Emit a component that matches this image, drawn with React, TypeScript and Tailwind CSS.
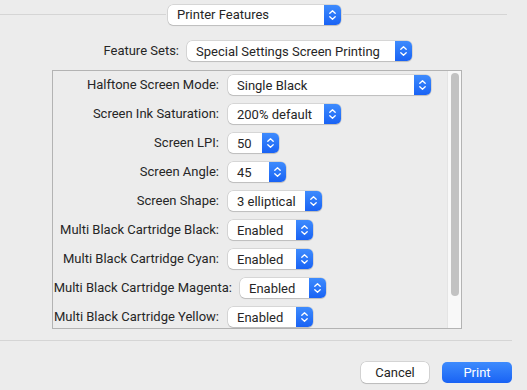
import React from "react";

const Chevrons = () => (
  <svg width="9" height="12" viewBox="0 0 9 12" fill="none" stroke="white" strokeWidth="1.3" strokeLinecap="round" strokeLinejoin="round">
    <path d="M1.8 4.3 L4.5 1.8 L7.2 4.3" />
    <path d="M1.8 7.7 L4.5 10.2 L7.2 7.7" />
  </svg>
);

const Popup = ({ text, width }: { text: string; width: number }) => (
  <div
    className="flex h-[20px] shrink-0 items-stretch rounded-[5px] bg-white shadow-[0_0_0_0.5px_rgba(0,0,0,0.18),0_1px_1px_rgba(0,0,0,0.12)]"
    style={{ width }}
  >
    <div className="flex flex-1 items-center overflow-hidden whitespace-nowrap pl-[9px] text-[13px] leading-none text-[#262626]">{text}</div>
    <div className="flex w-[17px] shrink-0 items-center justify-center rounded-r-[5px] bg-gradient-to-b from-[#3e8bfd] to-[#1962f4]">
      <Chevrons />
    </div>
  </div>
);

const rows: { label: string; value: string; w: number; lw?: number }[] = [
  { label: "Halftone Screen Mode:", value: "Single Black", w: 203 },
  { label: "Screen Ink Saturation:", value: "200% default", w: 113 },
  { label: "Screen LPI:", value: "50", w: 51 },
  { label: "Screen Angle:", value: "45", w: 58 },
  { label: "Screen Shape:", value: "3 elliptical", w: 94 },
  { label: "Multi Black Cartridge Black:", value: "Enabled", w: 85 },
  { label: "Multi Black Cartridge Cyan:", value: "Enabled", w: 85 },
  { label: "Multi Black Cartridge Magenta:", value: "Enabled", w: 86, lw: 179 },
  { label: "Multi Black Cartridge Yellow:", value: "Enabled", w: 85 },
];

export default function App() {
  return (
    <div
      className="flex h-[390px] w-[527px] flex-col bg-[#ececec] text-[13px] text-[#262626]"
      style={{ fontFamily: "Roboto, 'Noto Sans', sans-serif" }}
    >
      {/* top popup with line */}
      <div className="mt-[4px] flex h-[21px] items-center">
        <div className="h-px w-[166px] bg-[#d5d5d5]" />
        <div className="mx-[2px]">
          <Popup text="Printer Features" width={173} />
        </div>
        <div className="h-px w-[164px] bg-[#d5d5d5]" />
      </div>

      {/* feature sets */}
      <div className="mt-[16px] flex h-[20px] items-center">
        <div className="w-[179px] text-right">Feature Sets:</div>
        <div className="ml-[8px]">
          <Popup text="Special Settings Screen Printing" width={225} />
        </div>
      </div>

      {/* panel */}
      <div className="ml-[52px] mt-[9px] flex h-[259px] w-[410px] border border-[#b3b3b3]">
        <div className="flex flex-1 flex-col gap-[9px] pt-[4px]">
          {rows.map((r) => (
            <div key={r.label} className="flex h-[20px] items-center">
              <div className="shrink-0 text-right whitespace-nowrap" style={{ width: r.lw ?? 166 }}>
                {r.label}
              </div>
              <div className={r.lw ? "ml-[8px]" : "ml-[9px]"}>
                <Popup text={r.value} width={r.w} />
              </div>
            </div>
          ))}
        </div>
        <div className="flex w-[14px] justify-center border-l border-[#e4e4e4] bg-[#f8f8f8] pt-[2px]">
          <div className="h-[223px] w-[8px] rounded-full bg-[#c2c2c2]" />
        </div>
      </div>

      {/* bottom line */}
      <div className="mt-[11px] h-px w-[512px] bg-[#d5d5d5]" />

      {/* buttons */}
      <div className="mt-[21px] flex justify-end gap-[13px] pr-[15px]">
        <div className="flex h-[21px] w-[68px] items-center justify-center rounded-[5px] bg-white shadow-[0_0_0_0.5px_rgba(0,0,0,0.2),0_1px_1px_rgba(0,0,0,0.12)]">
          Cancel
        </div>
        <div className="flex h-[21px] w-[70px] items-center justify-center rounded-[5px] bg-gradient-to-b from-[#3e8bfd] to-[#1962f4] text-white">
          Print
        </div>
      </div>
    </div>
  );
}
